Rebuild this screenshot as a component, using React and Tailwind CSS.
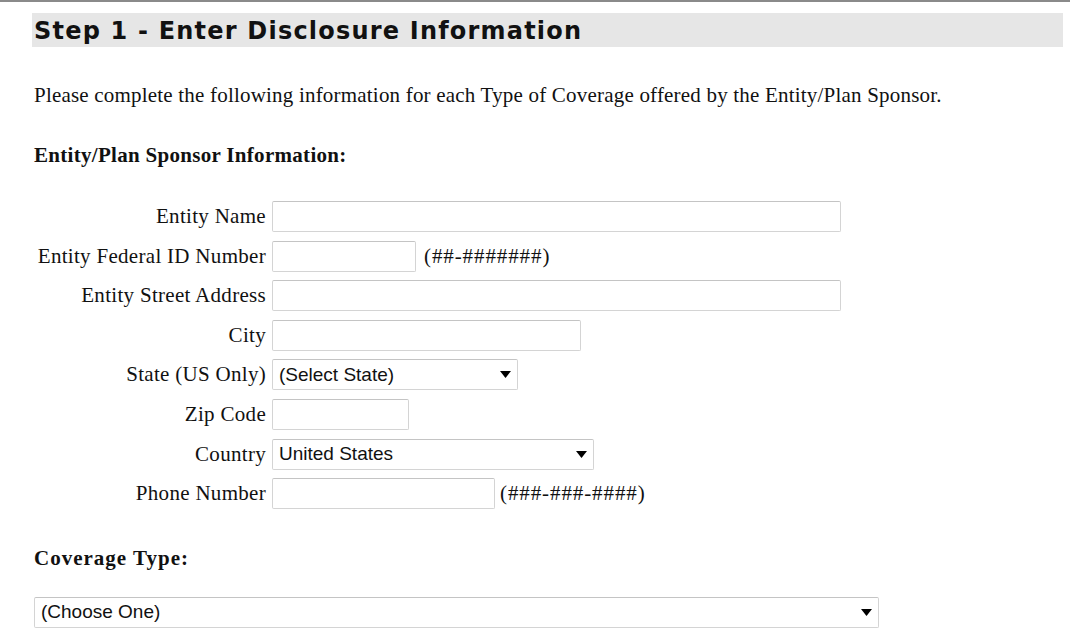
import React from "react";

const serif = { fontFamily: '"Liberation Serif", "Times New Roman", serif' };

function Arrow() {
  return (
    <svg width="11" height="7" viewBox="0 0 11 7" className="shrink-0">
      <path d="M0 0 H11 L5.5 7 Z" fill="#000" />
    </svg>
  );
}

function Input({ w }) {
  return (
    <div
      className={`h-[31px] rounded-[2px] border border-[#d4d4d4] border-t-[#c4c4c4] bg-white ${w}`}
    />
  );
}

function Select({ w, text }) {
  return (
    <div
      className={`h-[31px] rounded-[2px] border border-[#d4d4d4] border-t-[#c4c4c4] bg-white flex items-center justify-between pl-[6px] pr-[6px] ${w}`}
    >
      <span className="text-[19px] text-[#111] font-['Liberation_Sans',Arial,sans-serif]">
        {text}
      </span>
      <Arrow />
    </div>
  );
}

function Row({ label, children, gap }) {
  return (
    <div className="flex items-center h-[31px]">
      <div
        className="w-[240px] text-right pr-[6px] text-[21px] tracking-[0.3px] text-[#111] leading-none whitespace-nowrap"
        style={serif}
      >
        {label}
      </div>
      <div className={`flex items-center ${gap || "gap-[8px]"}`}>{children}</div>
    </div>
  );
}

function Hint({ children }) {
  return (
    <span className="text-[21px] tracking-[0.9px] text-[#111] leading-none" style={serif}>
      {children}
    </span>
  );
}

export default function App() {
  return (
    <div className="w-[1070px] h-[631px] bg-white overflow-hidden">
      <div className="h-[2px] bg-[#8a8a8a]" />
      <div className="ml-[32px] mr-[7px] mt-[11px]">
        <div className="h-[34px] bg-[#e6e6e6] flex items-center pl-[2px] pt-[2px]">
          <span className="text-[24px] font-bold text-[#111] font-['DejaVu_Sans',Verdana,sans-serif] tracking-[1.2px] whitespace-nowrap">
            Step 1 - Enter Disclosure Information
          </span>
        </div>
        <div className="pl-[2px]">
          <p className="mt-[37px] text-[21px] tracking-[0.2px] leading-[22px] text-[#111] whitespace-nowrap" style={serif}>
            Please complete the following information for each Type of Coverage offered by the Entity/Plan Sponsor.
          </p>
          <p className="mt-[38px] text-[21px] tracking-[0.3px] leading-[22px] font-bold text-[#111]" style={serif}>
            Entity/Plan Sponsor Information:
          </p>
        </div>
        <div className="mt-[35px] flex flex-col gap-y-[8.6px]">
          <Row label="Entity Name">
            <Input w="w-[569px]" />
          </Row>
          <Row label="Entity Federal ID Number">
            <Input w="w-[144px]" />
            <Hint>(##-#######)</Hint>
          </Row>
          <Row label="Entity Street Address">
            <Input w="w-[569px]" />
          </Row>
          <Row label="City">
            <Input w="w-[309px]" />
          </Row>
          <Row label="State (US Only)">
            <Select w="w-[246px]" text="(Select State)" />
          </Row>
          <Row label="Zip Code">
            <Input w="w-[137px]" />
          </Row>
          <Row label="Country">
            <Select w="w-[322px]" text="United States" />
          </Row>
          <Row label="Phone Number" gap="gap-[5px]">
            <Input w="w-[223px]" />
            <Hint>(###-###-####)</Hint>
          </Row>
        </div>
        <div className="pl-[2px]">
          <p className="mt-[38px] text-[21px] tracking-[1px] leading-[22px] font-bold text-[#111]" style={serif}>
            Coverage Type:
          </p>
          <div className="mt-[28px]">
            <Select w="w-[845px]" text="(Choose One)" />
          </div>
        </div>
      </div>
    </div>
  );
}
